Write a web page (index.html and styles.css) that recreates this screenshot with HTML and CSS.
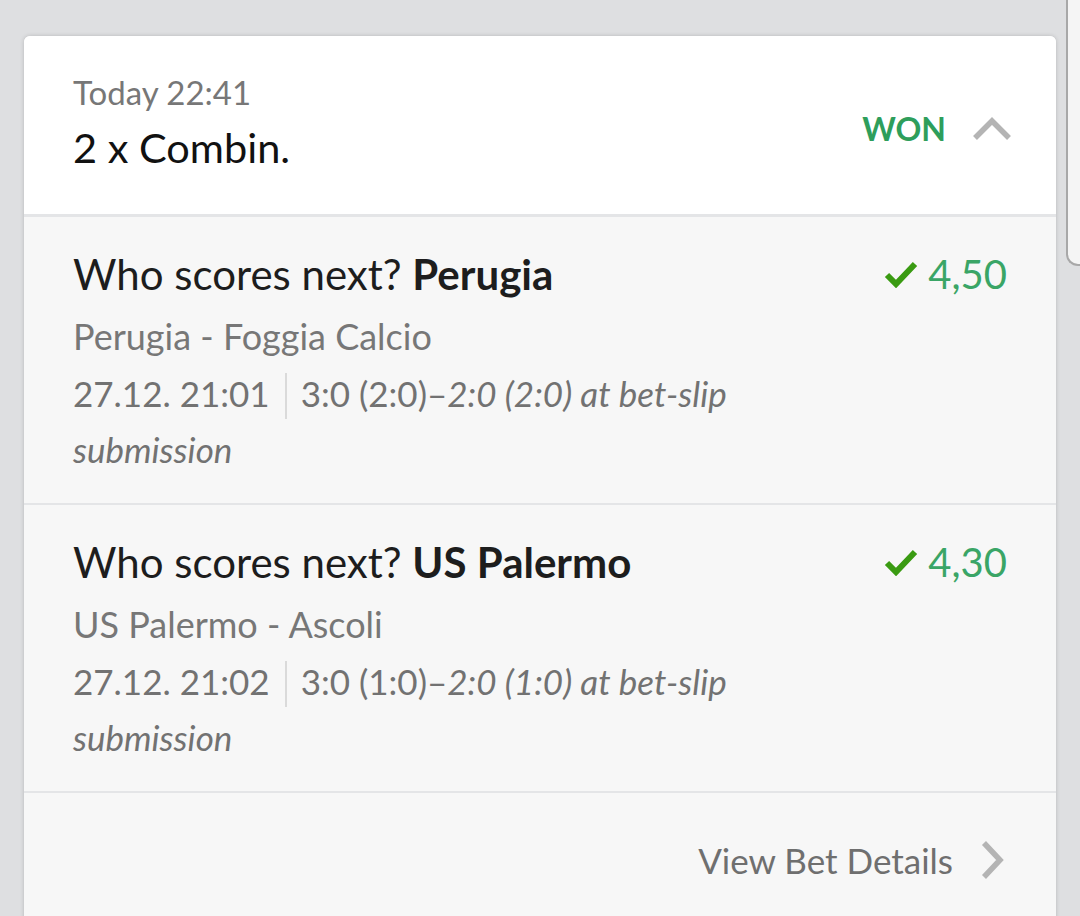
FILE: index.html
```html
<!DOCTYPE html>
<html>
<head>
<meta charset="utf-8">
<link rel="stylesheet" href="styles.css">
</head>
<body>
<div class="page">
  <div class="card">
    <div class="head">
      <div class="head-left">
        <div class="when">Today 22:41</div>
        <div class="kind">2 x Combin.</div>
      </div>
      <div class="head-right">
        <span class="status">WON</span>
        <svg class="chev-up" width="40" height="26" viewBox="0 0 40 26"><path d="M3 23 L20 6 L37 23" fill="none" stroke="#b4b4b4" stroke-width="5.5"/></svg>
      </div>
    </div>
    <div class="sel">
      <div class="sel-top">
        <div class="sel-title">Who scores next? <b>Perugia</b></div>
        <div class="odds">
          <svg class="check" width="34" height="28" viewBox="0 0 34 28"><path d="M3 15 L12 24 L31 4" fill="none" stroke="#3a9b12" stroke-width="6"/></svg>
          <span>4,50</span>
        </div>
      </div>
      <div class="sel-event">Perugia - Foggia Calcio</div>
      <div class="sel-meta">27.12. 21:01<span class="vsep"></span>3:0 (2:0)–<i>2:0 (2:0) at bet-slip submission</i></div>
    </div>
    <div class="sel">
      <div class="sel-top">
        <div class="sel-title">Who scores next? <b>US Palermo</b></div>
        <div class="odds">
          <svg class="check" width="34" height="28" viewBox="0 0 34 28"><path d="M3 15 L12 24 L31 4" fill="none" stroke="#3a9b12" stroke-width="6"/></svg>
          <span>4,30</span>
        </div>
      </div>
      <div class="sel-event">US Palermo - Ascoli</div>
      <div class="sel-meta">27.12. 21:02<span class="vsep"></span>3:0 (1:0)–<i>2:0 (1:0) at bet-slip submission</i></div>
    </div>
    <div class="foot">
      <span class="details">View Bet Details</span>
      <svg class="chev-right" width="26" height="40" viewBox="0 0 26 40"><path d="M5 3 L21 20 L5 37" fill="none" stroke="#b4b4b4" stroke-width="5.5"/></svg>
    </div>
  </div>
  <div class="peek"></div>
</div>
</body>
</html>
```
FILE: styles.css
```css
html, body {
  margin: 0;
  padding: 0;
  height: 100%;
  overflow: hidden;
}
body {
  background: #dedfe1;
  font-family: Lato, "Liberation Sans", sans-serif;
}
.page {
  display: flex;
  align-items: flex-start;
  padding-left: 24px;
}
.card {
  flex: none;
  width: 1032px;
  margin-top: 36px;
  background: #f7f7f7;
  border-radius: 6px 6px 0 0;
  box-shadow: 0 0 4px rgba(0, 0, 0, 0.18);
  overflow: hidden;
  min-height: 900px;
}
.head {
  background: #fff;
  height: 181px;
  box-sizing: border-box;
  padding: 36px 44px 0 49px;
  display: flex;
  justify-content: space-between;
  border-bottom: 3px solid #e4e5e7;
}
.when {
  font-size: 33px;
  line-height: 40px;
  color: #777;
}
.kind {
  font-size: 41.5px;
  line-height: 56px;
  margin-top: 7px;
  color: #111;
}
.head-right {
  display: flex;
  align-items: center;
  gap: 26px;
  height: 112px;
}
.status {
  font-size: 32px;
  font-weight: 700;
  color: #2e9e5b;
}
.sel {
  padding: 29px 49px 26px 49px;
  border-bottom: 2px solid #e4e5e7;
}
.sel-top {
  display: flex;
  justify-content: space-between;
  align-items: flex-start;
}
.sel-title {
  font-size: 42px;
  line-height: 56px;
  color: #1d1d1d;
}
.sel-title b {
  font-weight: 700;
}
.odds {
  display: flex;
  align-items: center;
  gap: 10px;
  font-size: 40px;
  line-height: 56px;
  color: #3aa566;
}
.sel-event {
  margin-top: 5px;
  font-size: 36px;
  line-height: 58px;
  color: #777;
}
.sel-meta {
  font-size: 35px;
  line-height: 56px;
  color: #727272;
  width: 720px;
}
.vsep {
  display: inline-block;
  width: 2px;
  height: 46px;
  background: #dadada;
  margin: 0 14px 0 15px;
  vertical-align: -12px;
}
.foot {
  display: flex;
  justify-content: flex-end;
  align-items: center;
  gap: 26px;
  padding: 42px 51px 0 0;
}
.details {
  font-size: 35px;
  line-height: 50px;
  color: #6f6f6f;
}
.peek {
  flex: none;
  width: 30px;
  height: 266px;
  margin-left: 10px;
  box-sizing: border-box;
  background: #f5f5f5;
  border-left: 2px solid #a8a8a8;
  border-bottom: 2px solid #a8a8a8;
  border-bottom-left-radius: 12px;
}
```
